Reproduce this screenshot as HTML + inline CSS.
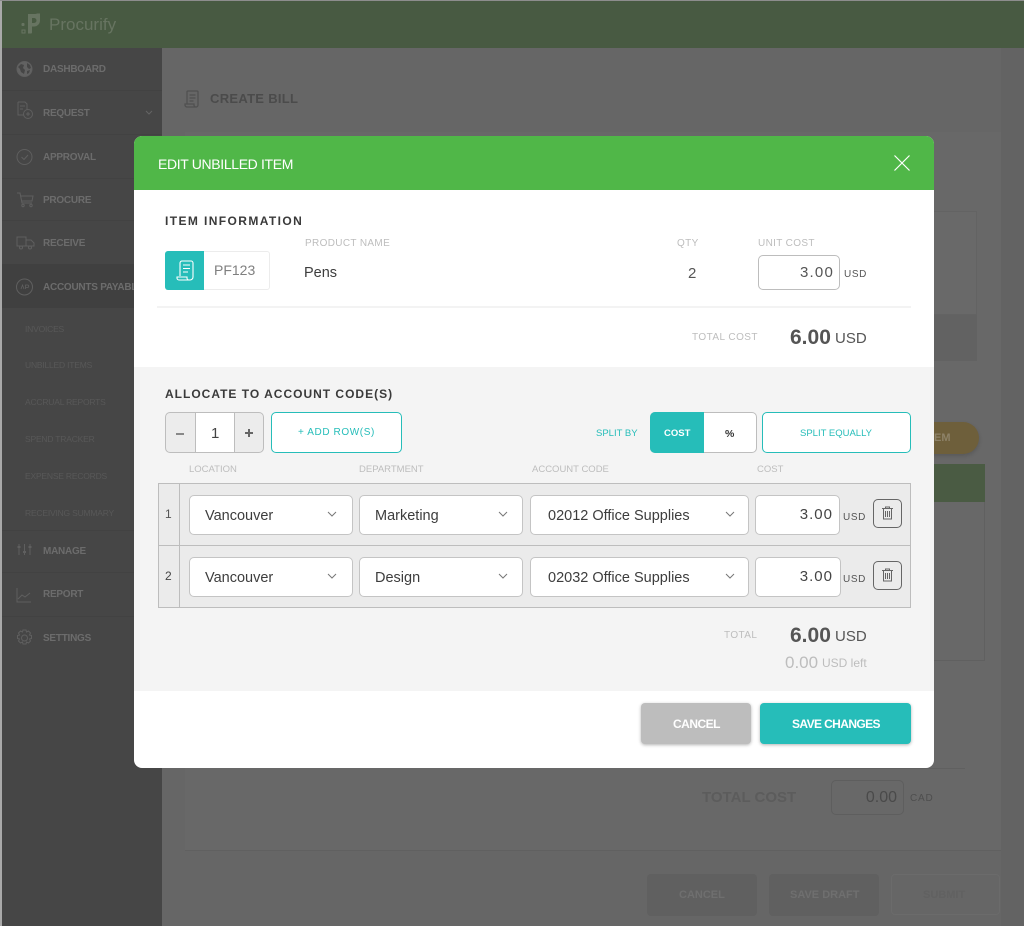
<!DOCTYPE html>
<html><head><meta charset="utf-8"><style>
*{box-sizing:border-box}
html,body{margin:0;padding:0}
body{width:1024px;height:926px;position:relative;overflow:hidden;background:#666;font-family:"Liberation Sans","DejaVu Sans",sans-serif}
.a,.t{position:absolute}
.t{white-space:nowrap;line-height:1}
.nav{color:#6c6c6c;font-weight:700;font-size:10px;letter-spacing:-.25px;left:43px}
.sub{color:#585858;font-size:8.5px;letter-spacing:-.2px;left:25px}
.lab{color:#bdbdbd;font-size:10px;letter-spacing:.35px}
.lab2{color:#bdbdbd;font-size:9.5px}
.h{color:#3a3a3a;font-size:12px;font-weight:700}
.sel{position:absolute;background:#fff;border:1px solid #c4c4c4;border-radius:5px;height:40px}
.sel span{position:absolute;left:15px;top:13px;font-size:14.5px;line-height:1;color:#3d3d3d;white-space:nowrap}
.chev{position:absolute;top:15px;width:10px;height:7px}
.usd{color:#555;font-size:10px;letter-spacing:.6px}
.trash{position:absolute;left:873px;width:29px;height:29px;border:1px solid #666;border-radius:5px}
</style></head><body>
<!-- background -->
<div class="a" style="left:0;top:0;width:2px;height:926px;background:#a9a9a9"></div>
<div class="a" style="left:0;top:0;width:1024px;height:1px;background:#8d8d8d"></div>
<div class="a" style="left:2px;top:1px;width:1022px;height:47px;background:#485a42"></div>
<svg class="a" style="left:20px;top:13px" width="22" height="22" viewBox="0 0 22 22"><rect x="1.500" y="10" width="3" height="3" rx="1" fill="#677461"/><rect x="2" y="17" width="3" height="3" fill="none" stroke="#677461"/><path d="M8 1h7a4 4 0 0 0 2-.5h3v7a6 6 0 0 1-6 6h-2v6a1 1 0 0 1-1 1H8zM12 5v5h2a2.500 2.500 0 0 0 0-5z" fill="#677461" fill-rule="evenodd"/></svg>
<div class="t" style="left:49px;top:16px;font-size:17px;color:#677461">Procurify</div>
<div class="a" style="left:162px;top:48px;width:862px;height:878px;background:#666"></div>
<div class="a" style="left:1001px;top:48px;width:23px;height:878px;background:#636363"></div>
<div class="a" style="left:2px;top:48px;width:160px;height:878px;background:#464646"></div>
<div class="a" style="left:2px;top:264px;width:160px;height:44px;background:#404040"></div>
<div class="a" style="left:2px;top:90px;width:160px;height:1px;background:#424242"></div>
<div class="a" style="left:2px;top:134px;width:160px;height:1px;background:#424242"></div>
<div class="a" style="left:2px;top:178px;width:160px;height:1px;background:#424242"></div>
<div class="a" style="left:2px;top:220px;width:160px;height:1px;background:#424242"></div>
<div class="a" style="left:2px;top:530px;width:160px;height:1px;background:#424242"></div>
<div class="a" style="left:2px;top:572px;width:160px;height:1px;background:#424242"></div>
<div class="a" style="left:2px;top:616px;width:160px;height:1px;background:#424242"></div>
<div class="t nav" style="top:65px">DASHBOARD</div>
<div class="t nav" style="top:109px">REQUEST</div>
<div class="t nav" style="top:153px">APPROVAL</div>
<div class="t nav" style="top:196px">PROCURE</div>
<div class="t nav" style="top:239px">RECEIVE</div>
<div class="t nav" style="top:283px">ACCOUNTS PAYABL</div>
<div class="t sub" style="top:325px">INVOICES</div>
<div class="t sub" style="top:361px">UNBILLED ITEMS</div>
<div class="t sub" style="top:398px">ACCRUAL REPORTS</div>
<div class="t sub" style="top:435px">SPEND TRACKER</div>
<div class="t sub" style="top:472px">EXPENSE RECORDS</div>
<div class="t sub" style="top:509px">RECEIVING SUMMARY</div>
<div class="t nav" style="top:547px">MANAGE</div>
<div class="t nav" style="top:590px">REPORT</div>
<div class="t nav" style="top:634px">SETTINGS</div>
<svg class="a" style="left:14px;top:58px" width="26" height="600" viewBox="0 0 26 600" fill="none" stroke="#5f5f5f" stroke-width="1">
<circle cx="10.500" cy="11" r="7.500" fill="#626262"/>
<path d="M4 9l3-3 3 1-1 3 2 2-1 4-3-2-1-3zM13 5l3 2 1 3-2 1-2-2zM13 13l3-1-1 3-2 1z" fill="#464646" stroke="none"/>
<path d="M4 44h7l2 2v6M4 44v13h6M6 48h5M6 51h3"/><circle cx="14" cy="56" r="4.500"/><path d="M14 54v4M12 56h4"/>
<circle cx="10.500" cy="99" r="7.500"/><path d="M7.500 99l2.500 2.500 4-4.500"/>
<path d="M3 135h3l2 10h10M7 138h12l-1 5H8"/><circle cx="9" cy="147.500" r="1.200"/><circle cx="17" cy="147.500" r="1.200"/>
<path d="M3 179h9v9H3zM12 182h5l3 3v3h-8"/><circle cx="7" cy="189.500" r="1.500"/><circle cx="16" cy="189.500" r="1.500"/>
<circle cx="10.500" cy="229" r="8"/><path d="M7 231l1.500-4 1.500 4M11.500 231v-4h2a1 1 0 0 1 0 2.500h-2" stroke-width=".8"/>
<path d="M5 486v11M10.500 486v11M16 486v11"/><path d="M3.500 489h3M9 494h3M14.500 489h3" stroke-width="2"/>
<path d="M3 530v14h14M4 541l4-4 3 2 5-4"/>
<circle cx="10.500" cy="580" r="3"/><path d="M9 572h3l.5 2 2-1 2 2-1 2 2 .5v3l-2 .5 1 2-2 2-2-1-.5 2H9l-.5-2-2 1-2-2 1-2-2-.5v-3l2-.5-1-2 2-2 2 1z"/>
</svg>
<svg class="a" style="left:145px;top:110px" width="8" height="6" viewBox="0 0 8 6" fill="none" stroke="#646464"><path d="M1 1l3 3 3-3"/></svg>
<svg class="a" style="left:184px;top:90px" width="16" height="18" viewBox="0 0 16 18" fill="none" stroke="#505050" stroke-width="1.300"><path d="M3 14V2a1 1 0 0 1 1-1h9a1 1 0 0 1 1 1v13a2 2 0 0 1-2 2H3a2 2 0 0 1-2-2v-1h9v1a2 2 0 0 0 2 2"/><path d="M5.500 5h6M5.500 8h6M5.500 11h4"/></svg>
<div class="t" style="left:210px;top:92px;font-size:13px;font-weight:700;color:#4b4b4b;letter-spacing:.3px">CREATE BILL</div>
<div class="a" style="left:185px;top:132px;width:816px;height:719px;background:#686868;border-bottom:1px solid #606060"></div>
<div class="a" style="left:900px;top:211px;width:77px;height:104px;background:#696969;border:1px solid #636363"></div>
<div class="a" style="left:900px;top:315px;width:77px;height:46px;background:#626262"></div>
<div class="a" style="left:900px;top:422px;width:79px;height:32px;border-radius:16px;background:#6e5f3b;box-shadow:0 2px 4px rgba(0,0,0,.15)"></div>
<div class="t" style="left:934px;top:433px;font-size:11px;font-weight:700;color:#8d8268">EM</div>
<div class="a" style="left:900px;top:464px;width:85px;height:38px;background:#4a5b43"></div>
<div class="a" style="left:900px;top:502px;width:85px;height:159px;border:1px solid #606060;border-top:0"></div>
<div class="a" style="left:700px;top:768px;width:265px;height:1px;background:#606060"></div>
<div class="t" style="left:702px;top:790px;font-size:15px;font-weight:700;color:#5c5c5c">TOTAL COST</div>
<div class="a" style="left:831px;top:780px;width:73px;height:35px;border:1px solid #5e5e5e;border-radius:5px"></div>
<div class="t" style="right:127px;top:790px;font-size:16px;color:#4a4a4a">0.00</div>
<div class="t" style="left:910px;top:794px;font-size:10px;color:#4e4e4e;letter-spacing:.8px">CAD</div>
<div class="a" style="left:647px;top:874px;width:110px;height:42px;border-radius:4px;background:#606060"></div>
<div class="a" style="left:769px;top:874px;width:110px;height:42px;border-radius:4px;background:#606060"></div>
<div class="a" style="left:891px;top:874px;width:109px;height:41px;border-radius:4px;border:1px solid #6b6b6b"></div>
<div class="t" style="left:679px;top:890px;font-size:11px;font-weight:700;color:#6f6f6f">CANCEL</div>
<div class="t" style="left:790px;top:890px;font-size:11px;font-weight:700;color:#6f6f6f">SAVE DRAFT</div>
<div class="t" style="left:923px;top:890px;font-size:11px;font-weight:700;color:#616161">SUBMIT</div>

<!-- modal -->
<div class="a" style="left:134px;top:136px;width:800px;height:632px;background:#fff;border-radius:8px;overflow:hidden">
 <div class="a" style="left:0;top:0;width:800px;height:54px;background:#50b748"></div>
 <div class="a" style="left:0;top:231px;width:800px;height:324px;background:#f4f4f4"></div>
 <div class="a" style="left:23px;top:170px;width:754px;height:2px;background:#f3f3f3"></div>
</div>
<div class="t" style="left:158px;top:157px;font-size:14px;letter-spacing:-.35px;color:#fff">EDIT UNBILLED ITEM</div>
<svg class="a" style="left:893px;top:154px" width="18" height="18" viewBox="0 0 18 18" stroke="#fff" stroke-width="1.200"><path d="M1.500 1.500l15 15M16.500 1.500l-15 15"/></svg>

<div class="t h" style="left:165px;top:215px;letter-spacing:1.400px">ITEM INFORMATION</div>
<div class="a" style="left:165px;top:251px;width:105px;height:39px;border:1px solid #ececec;border-radius:3px;background:#fff"></div>
<div class="a" style="left:165px;top:251px;width:39px;height:39px;background:#26bdb9;border-radius:3px 0 0 3px"></div>
<svg class="a" style="left:176px;top:260px" width="18" height="21" viewBox="0 0 18 21" fill="none" stroke="#fff" stroke-width="1.100"><path d="M4 16V3a2 2 0 0 1 2-2h9a2 2 0 0 1 2 2v14a3 3 0 0 1-3 3H3a2 2 0 0 1-2-2v-1h10v1a2 2 0 0 0 2 2"/><path d="M7 5h7M7 8.500h7M7 12h5"/></svg>
<div class="t" style="left:214px;top:263px;font-size:14px;color:#7f7f7f">PF123</div>
<div class="t lab" style="left:305px;top:239px">PRODUCT NAME</div>
<div class="t" style="left:304px;top:266px;font-size:14.500px;color:#3d3d3d">Pens</div>
<div class="t lab" style="left:677px;top:239px">QTY</div>
<div class="t" style="left:688px;top:266px;font-size:15px;color:#555">2</div>
<div class="t lab" style="left:758px;top:239px">UNIT COST</div>
<div class="a" style="left:758px;top:255px;width:82px;height:35px;border:1px solid #bdbdbd;border-radius:5px;background:#fff"></div>
<div class="t" style="right:190px;top:265px;font-size:15px;color:#555;letter-spacing:1.200px">3.00</div>
<div class="t usd" style="left:844px;top:270px">USD</div>
<div class="t lab" style="left:692px;top:333px;letter-spacing:.45px">TOTAL COST</div>
<div class="t" style="left:790px;top:327px;font-size:21px;font-weight:700;color:#555">6.00</div>
<div class="t" style="left:835px;top:331px;font-size:15px;color:#555">USD</div>

<div class="t h" style="left:165px;top:388px;letter-spacing:1px">ALLOCATE TO ACCOUNT CODE(S)</div>
<div class="a" style="left:165px;top:412px;width:99px;height:41px;border:1px solid #bdbdbd;border-radius:5px;background:#ececec;overflow:hidden"><div class="a" style="left:29px;top:0;width:40px;height:39px;background:#fff;border-left:1px solid #bdbdbd;border-right:1px solid #bdbdbd"></div></div>
<div class="a" style="left:176px;top:433px;width:8px;height:1.500px;background:#888"></div>
<div class="t" style="left:211px;top:426px;font-size:15px;color:#444">1</div>
<div class="a" style="left:245px;top:432px;width:8px;height:1.500px;background:#666"></div>
<div class="a" style="left:248.300px;top:429px;width:1.500px;height:8px;background:#666"></div>
<div class="a" style="left:271px;top:412px;width:131px;height:41px;border:1px solid #26bdb9;border-radius:5px;background:#fff"></div>
<div class="t" style="left:298px;top:428px;font-size:10px;color:#26bdb9;letter-spacing:.6px">+ ADD ROW(S)</div>
<div class="t" style="left:596px;top:429px;font-size:9.500px;color:#26bdb9">SPLIT BY</div>
<div class="a" style="left:650px;top:412px;width:107px;height:41px;border:1px solid #bdbdbd;border-radius:5px;background:#fff"></div>
<div class="a" style="left:650px;top:412px;width:54px;height:41px;background:#26bdb9;border-radius:5px 0 0 5px"></div>
<div class="t" style="left:664px;top:429px;font-size:9.500px;font-weight:700;color:#fff">COST</div>
<div class="t" style="left:725px;top:429px;font-size:10.500px;font-weight:700;color:#333">%</div>
<div class="a" style="left:762px;top:412px;width:149px;height:41px;border:1px solid #26bdb9;border-radius:5px;background:#fff"></div>
<div class="t" style="left:800px;top:429px;font-size:9.500px;color:#26bdb9">SPLIT EQUALLY</div>

<div class="t lab2" style="left:189px;top:465px">LOCATION</div>
<div class="t lab2" style="left:359px;top:465px">DEPARTMENT</div>
<div class="t lab2" style="left:532px;top:465px">ACCOUNT CODE</div>
<div class="t lab2" style="left:757px;top:465px">COST</div>

<div class="a" style="left:158px;top:483px;width:753px;height:125px;background:#ebebeb;border:1px solid #bdbdbd"></div>
<div class="a" style="left:159px;top:545px;width:751px;height:1px;background:#bdbdbd"></div>
<div class="a" style="left:179px;top:484px;width:1px;height:123px;background:#bdbdbd"></div>
<div class="t" style="left:165px;top:508px;font-size:12px;color:#555">1</div>
<div class="t" style="left:165px;top:570px;font-size:12px;color:#444">2</div>

<div class="sel" style="left:189px;top:495px;width:164px"><span>Vancouver</span><svg class="chev" style="left:137px" viewBox="0 0 10 7" fill="none" stroke="#777"><path d="M1 1l4 4 4-4"/></svg></div>
<div class="sel" style="left:359px;top:495px;width:164px"><span>Marketing</span><svg class="chev" style="left:138px" viewBox="0 0 10 7" fill="none" stroke="#777"><path d="M1 1l4 4 4-4"/></svg></div>
<div class="sel" style="left:530px;top:495px;width:219px"><span style="left:17px">02012 Office Supplies</span><svg class="chev" style="left:194px" viewBox="0 0 10 7" fill="none" stroke="#777"><path d="M1 1l4 4 4-4"/></svg></div>
<div class="sel" style="left:755px;top:495px;width:85px"></div>
<div class="t" style="right:191px;top:507px;font-size:15px;color:#444;letter-spacing:1px">3.00</div>
<div class="t usd" style="left:843px;top:513px">USD</div>
<div class="trash" style="top:499px"><svg class="a" style="left:8px;top:6px" width="11" height="14" viewBox="0 0 11 14" fill="none" stroke="#666"><path d="M0 2.500h11M3.500 2.500V1h4v1.500M1.500 2.500V13h8V2.500M3.500 5v6M5.500 5v6M7.500 5v6"/></svg></div>

<div class="sel" style="left:189px;top:557px;width:164px"><span>Vancouver</span><svg class="chev" style="left:137px" viewBox="0 0 10 7" fill="none" stroke="#777"><path d="M1 1l4 4 4-4"/></svg></div>
<div class="sel" style="left:359px;top:557px;width:164px"><span>Design</span><svg class="chev" style="left:138px" viewBox="0 0 10 7" fill="none" stroke="#777"><path d="M1 1l4 4 4-4"/></svg></div>
<div class="sel" style="left:530px;top:557px;width:219px"><span style="left:17px">02032 Office Supplies</span><svg class="chev" style="left:194px" viewBox="0 0 10 7" fill="none" stroke="#777"><path d="M1 1l4 4 4-4"/></svg></div>
<div class="sel" style="left:755px;top:557px;width:86px"></div>
<div class="t" style="right:191px;top:569px;font-size:15px;color:#444;letter-spacing:1px">3.00</div>
<div class="t usd" style="left:843px;top:575px">USD</div>
<div class="trash" style="top:561px"><svg class="a" style="left:8px;top:6px" width="11" height="14" viewBox="0 0 11 14" fill="none" stroke="#666"><path d="M0 2.500h11M3.500 2.500V1h4v1.500M1.500 2.500V13h8V2.500M3.500 5v6M5.500 5v6M7.500 5v6"/></svg></div>

<div class="t lab" style="left:724px;top:631px;letter-spacing:.4px">TOTAL</div>
<div class="t" style="left:790px;top:625px;font-size:21px;font-weight:700;color:#555">6.00</div>
<div class="t" style="left:835px;top:629px;font-size:15px;color:#555">USD</div>
<div class="t" style="left:785px;top:654px;font-size:17px;color:#bdbdbd">0.00</div>
<div class="t" style="left:822px;top:657px;font-size:12px;color:#bdbdbd">USD left</div>

<div class="a" style="left:641px;top:703px;width:110px;height:41px;border-radius:4px;background:#bdbdbd;box-shadow:0 1px 3px rgba(0,0,0,.3)"></div>
<div class="a" style="left:760px;top:703px;width:151px;height:41px;border-radius:4px;background:#26bdb9;box-shadow:0 1px 3px rgba(0,0,0,.3)"></div>
<div class="t" style="left:673px;top:718px;font-size:12px;letter-spacing:-.5px;font-weight:700;color:#fff">CANCEL</div>
<div class="t" style="left:792px;top:718px;font-size:12px;letter-spacing:-.6px;font-weight:700;color:#fff">SAVE CHANGES</div>
</body></html>
